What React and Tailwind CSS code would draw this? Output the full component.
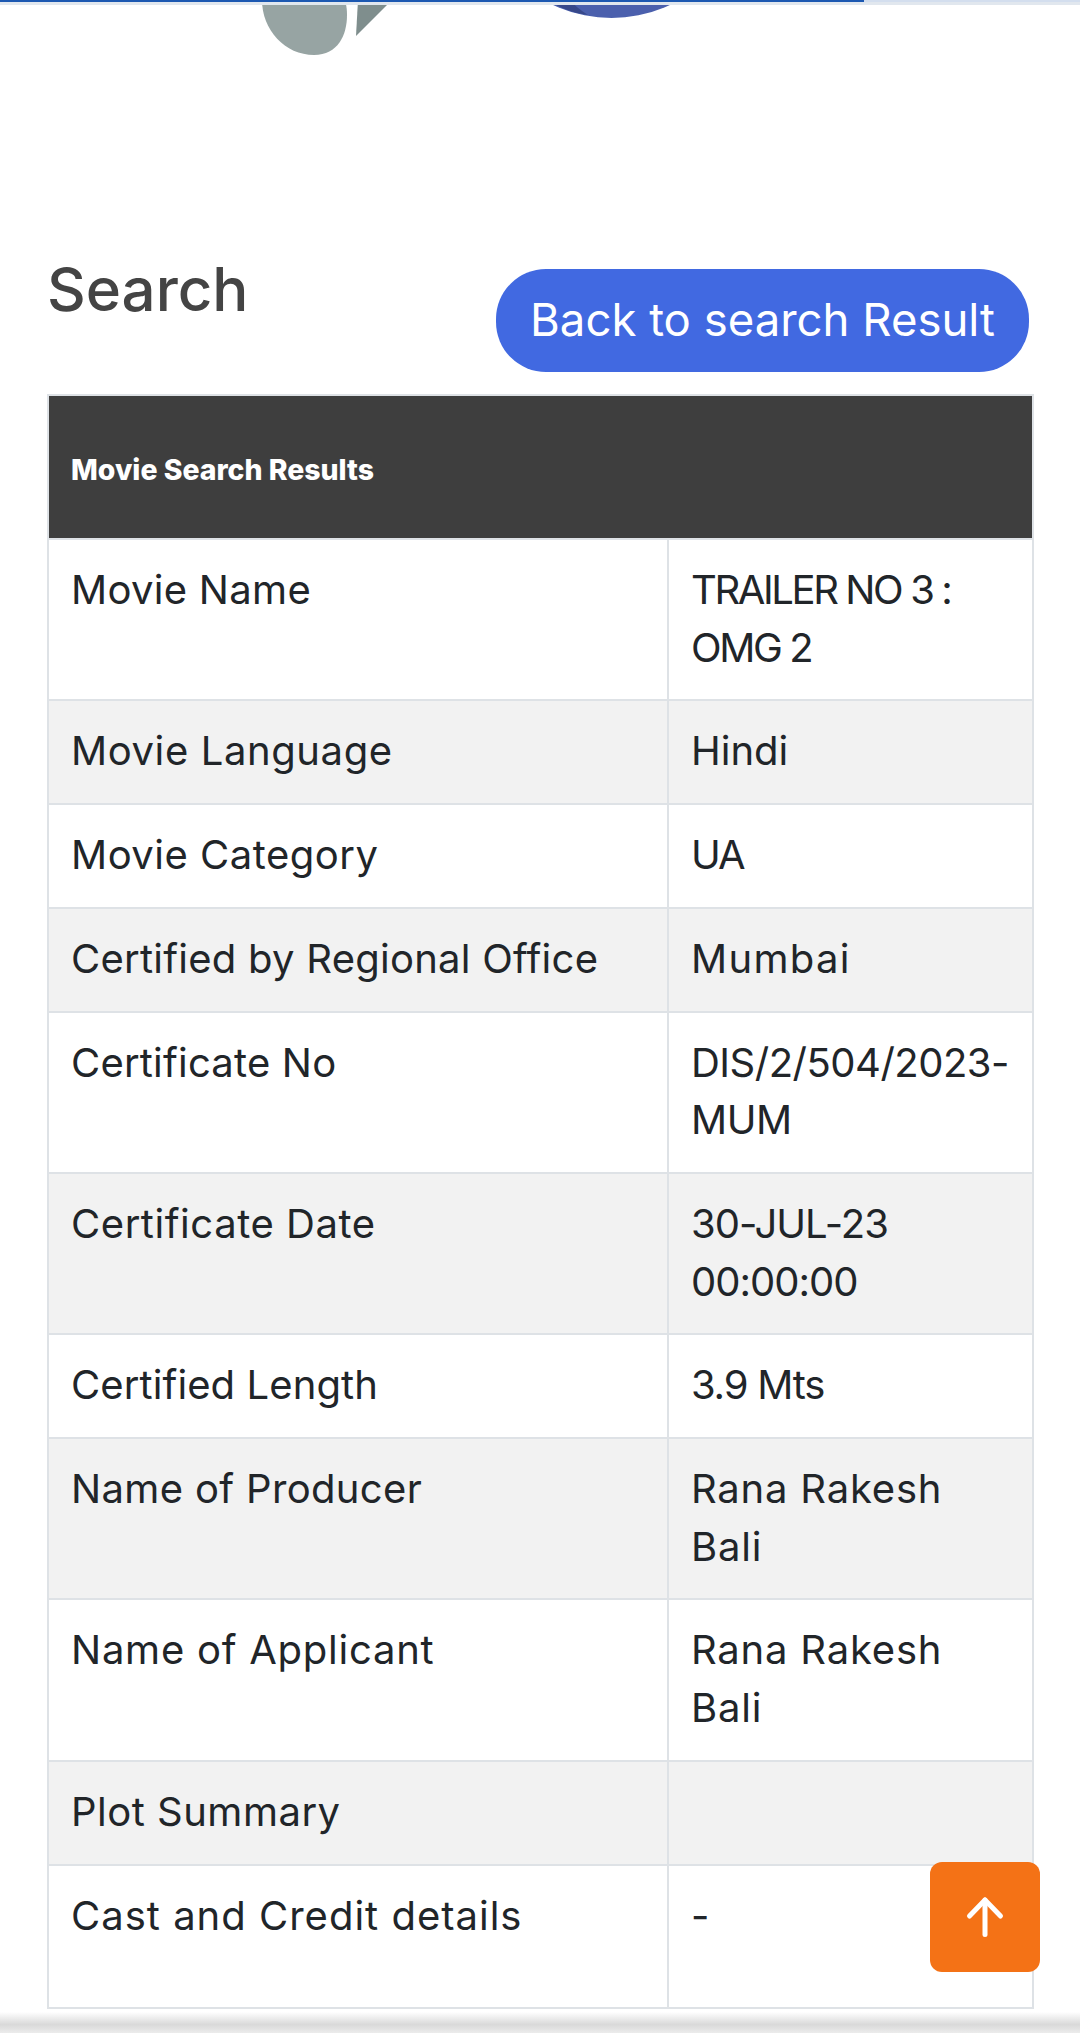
const rows = [
  ["Movie Name", "tracking-[0.3px]", "TRAILER NO 3 : OMG 2", "tracking-[-2.4px]"],
  ["Movie Language", "tracking-[0.6px]", "Hindi", ""],
  ["Movie Category", "tracking-[0.5px]", "UA", "tracking-[-2px]"],
  ["Certified by Regional Office", "tracking-[0.25px]", "Mumbai", "tracking-[1.3px]"],
  ["Certificate No", "tracking-[0.2px]", "DIS/2/504/2023-MUM", "tracking-[-0.5px]"],
  ["Certificate Date", "tracking-[0.55px]", "30-JUL-23 00:00:00", "tracking-[-1px]"],
  ["Certified Length", "tracking-[0.1px]", "3.9 Mts", "tracking-[-1.2px]"],
  ["Name of Producer", "tracking-[0.35px]", "Rana Rakesh Bali", "tracking-[0.8px]"],
  ["Name of Applicant", "tracking-[0.75px]", "Rana Rakesh Bali", "tracking-[0.8px]"],
  ["Plot Summary", "tracking-[0.5px]", "", ""],
];

function LogoPiece() {
  return (
    <svg width="1080" height="60" viewBox="0 0 1080 60" className="block">
      <path d="M262 0 C262 30 285 55 314 55 C338 55 347 35 347 15 C347 8 346 4 345 0 Z" fill="#97a4a3" />
      <polygon points="358,0 392,0 356,36" fill="#7f8e8d" />
      <circle cx="611.5" cy="-120" r="138" fill="#4b60ad" />
      <path d="M548 0 C560 8 573 13 588 15 C580 10 574 5 570 0 Z" fill="#37488a" />
    </svg>
  );
}

export default function App() {
  return (
    <div className="relative h-[2033px] overflow-hidden bg-white font-['Inter',sans-serif] text-[#212529]">
      <div className="absolute inset-x-0 top-0 h-[5px] bg-[#e1e7ee]">
        <div className="h-[2px] bg-[#d3deee]">
          <div className="h-[2px] w-[864px] bg-[#1c58b1]" />
        </div>
      </div>
      <LogoPiece />

      <div className="px-[47px] pt-[195px]">
        <div className="flex items-start justify-between">
          <h2 className="text-[60px] font-medium leading-[68px] text-[#444444]">Search</h2>
          <button className="mt-[14px] mr-[4px] h-[103px] w-[533px] rounded-[50px] bg-[#4169e1] text-[45.5px] text-white">
            Back to search Result
          </button>
        </div>

        <table className="mt-[22px] w-[987px] table-fixed border-collapse text-[40px] leading-[57.7px]">
          <colgroup>
            <col className="w-[620px]" />
            <col />
          </colgroup>
          <thead>
            <tr>
              <th colSpan={2} className="h-[144px] border-2 border-[#dee2e6] bg-[#3e3e3e] px-[22px] pt-[5px] text-left text-[28.4px] font-extrabold text-white">
                Movie Search Results
              </th>
            </tr>
          </thead>
          <tbody>
            {rows.map(([label, labelTrack, value, track], i) => (
              <tr key={label} className={i % 2 === 1 ? "bg-[#f2f2f2]" : "bg-white"}>
                <td className={`border-2 border-[#dee2e6] px-[22px] pt-[21px] pb-[23px] align-top ${labelTrack}`}>{label}</td>
                <td className={`border-2 border-[#dee2e6] px-[22px] pt-[21px] pb-[23px] align-top ${track}`}>{value}</td>
              </tr>
            ))}
            <tr>
              <td className="h-[143px] border-2 border-[#dee2e6] px-[22px] pt-[21px] pb-[23px] align-top tracking-[1px]">Cast and Credit details</td>
              <td className="border-2 border-[#dee2e6] px-[22px] pt-[21px] pb-[23px] align-top">-</td>
            </tr>
          </tbody>
        </table>
      </div>

      <div className="absolute inset-x-0 bottom-0 h-[21px] bg-gradient-to-b from-white via-[#d9d9d9] via-[60%] to-[#ececec]" />

      <button className="absolute left-[930px] top-[1862px] flex h-[110px] w-[110px] items-center justify-center rounded-[12px] bg-[#f47216] text-white">
        <svg width="40" height="44" viewBox="0 0 40 44" fill="none" stroke="currentColor" strokeWidth="5" strokeLinecap="round" strokeLinejoin="round">
          <path d="M20 39.5V5" />
          <path d="M4.5 21L20 5l15.5 16" />
        </svg>
      </button>
    </div>
  );
}
